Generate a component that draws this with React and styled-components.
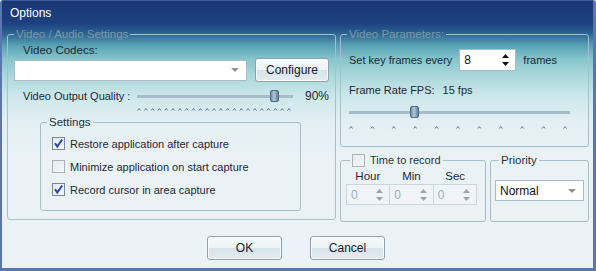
import React from "react";
import styled, { createGlobalStyle } from "styled-components";

const Global = createGlobalStyle`
  html, body { margin: 0; padding: 0; background: #ffffff; }
  body { font-family: "Liberation Sans", Arial, sans-serif; font-size: 11px; color: #1c2834; }
  * { box-sizing: border-box; }
`;

const Window = styled.div`
  width: 596px;
  height: 271px;
  display: flex;
  flex-direction: column;
  border: 3px solid #5b76ae;
  border-left-width: 2px;
  border-top: 1px solid #3d5c98;
  border-radius: 3px 3px 0 0;
  background: linear-gradient(
    180deg,
    #1a3774 0px,
    #1d4080 22px,
    #2c6692 33px,
    #5aa3b5 45px,
    #85c5cb 58px,
    #a9d7da 74px,
    #cce7ea 95px,
    #e2eff3 120px,
    #ebf2f6 160px
  );
`;

const TitleBar = styled.div`
  height: 24px;
  line-height: 24px;
  padding-left: 8px;
  color: #ffffff;
  font-size: 12px;
`;

const Body = styled.div`
  padding: 2px 4px 0 5px;
  display: flex;
  flex-direction: column;
`;

const Top = styled.div`
  display: grid;
  grid-template-columns: 329px 249px;
  column-gap: 4px;
`;

const Column = styled.div`
  display: flex;
  flex-direction: column;
  gap: 6px;
`;

const BottomRow = styled.div`
  display: grid;
  grid-template-columns: 146px 99px;
  column-gap: 4px;
`;

const Group = styled.fieldset`
  margin: 0;
  margin-left: ${(p) => p.$ml || 0}px;
  padding: 0 ${(p) => (p.$pad == null ? 6 : p.$pad)}px;
  min-width: 0;
  width: ${(p) => (p.$w ? p.$w + "px" : "auto")};
  height: ${(p) => p.$h}px;
  border: 1px solid #a3c0cb;
  border-radius: 3px;
  display: flex;
  flex-direction: column;
`;

const Legend = styled.legend`
  padding: 0 2px;
  margin-left: ${(p) => p.$ml || 0}px;
  line-height: 14px;
  font-size: ${(p) => p.$fs || 11}px;
  color: ${(p) => p.$color || "#26323e"};
  display: flex;
  align-items: center;
  gap: 5px;
`;

const Label = styled.div`
  line-height: 13px;
  font-size: ${(p) => p.$fs || 11.5}px;
  white-space: nowrap;
  flex: none;
  width: ${(p) => (p.$w ? p.$w + "px" : "auto")};
  margin: ${(p) => p.$mt || 0}px 0 0 ${(p) => p.$ml || 0}px;
`;

const Row = styled.div`
  display: flex;
  align-items: center;
  margin-top: ${(p) => p.$mt || 0}px;
  margin-left: ${(p) => p.$ml || 0}px;
  gap: ${(p) => p.$gap || 0}px;
  height: ${(p) => (p.$h ? p.$h + "px" : "auto")};
  font-size: 11px;
  white-space: nowrap;
`;

const Combo = styled.div`
  height: 21px;
  width: ${(p) => (p.$w ? p.$w + "px" : "100%")};
  background: #ffffff;
  border: 1px solid #acbcc6;
  display: flex;
  align-items: center;
  justify-content: space-between;
  padding: 0 7px 0 4px;
  font-size: 12px;
  color: #111;
`;

const Arrow = styled.span`
  width: 0;
  height: 0;
  border-left: 4px solid transparent;
  border-right: 4px solid transparent;
  border-top: 4px solid #8a949c;
`;

const Button = styled.button`
  width: ${(p) => p.$w || 75}px;
  height: 24px;
  padding: 0;
  border: 1px solid #8ea2ae;
  border-radius: 3px;
  box-shadow: inset 0 0 0 1px #f8fbfc;
  background: linear-gradient(180deg, #f7fafb 0%, #edf3f6 48%, #d7e3ea 52%, #e3ecf1 100%);
  font-family: "Liberation Sans", Arial, sans-serif;
  font-size: 12px;
  color: #16202a;
`;

const Track = styled.div`
  position: relative;
  flex: none;
  width: ${(p) => p.$w}px;
  height: 12px;
  &::before {
    content: "";
    position: absolute;
    left: 0;
    right: 0;
    top: 5px;
    height: 3px;
    background: #a5bcc8;
  }
`;

const Thumb = styled.div`
  position: absolute;
  top: 0;
  width: 9px;
  height: 12px;
  border: 1px solid #4d6d8d;
  border-radius: 2px;
  background: linear-gradient(90deg, #6b8ba6 0%, #b7cbd8 45%, #9cb4c6 60%, #5f7f9c 100%);
`;

const Value = styled.span`
  font-size: 12px;
  margin-left: 12px;
`;

const BoxWrap = styled.span`
  width: 13px;
  height: 13px;
  flex: none;
  border: 1px solid ${(p) => (p.$checked ? "#7a8896" : "#a9b3bc")};
  background: linear-gradient(135deg, #e4e9ee 0%, #f7f9fb 100%);
  display: inline-flex;
  align-items: center;
  justify-content: center;
`;

const CheckRow = styled.div`
  display: flex;
  align-items: center;
  gap: 5px;
  height: 15px;
  font-size: 11px;
  margin-top: ${(p) => p.$mt || 0}px;
  margin-left: 5px;
`;

const Spin = styled.div`
  height: ${(p) => p.$h || 22}px;
  width: ${(p) => (p.$w ? p.$w + "px" : "auto")};
  flex: ${(p) => (p.$w ? "none" : 1)};
  display: flex;
  align-items: center;
  justify-content: space-between;
  padding: 0 5px 0 4px;
  background: ${(p) => (p.$disabled ? "#eef4f7" : "#ffffff")};
  border: 1px solid ${(p) => (p.$disabled ? "#c9d6dd" : "#acbcc6")};
  color: ${(p) => (p.$disabled ? "#a4adb5" : "#111")};
  font-size: 12px;
`;

const Fields = styled.div`
  display: flex;
  width: 131px;
  margin-top: 1px;
`;

const Heads = styled.div`
  display: grid;
  grid-template-columns: repeat(3, 1fr);
  margin-top: 2px;
  line-height: 14px;
  font-size: 11.5px;
  text-align: center;
  width: 131px;
`;

const Buttons = styled.div`
  display: flex;
  justify-content: center;
  gap: 28px;
  margin-top: 14px;
  padding-right: 4px;
`;

function Check({ checked }) {
  return (
    <BoxWrap $checked={checked}>
      {checked && (
        <svg width="11" height="11" viewBox="0 0 11 11">
          <path d="M2 5.2 L4.3 8.5 L9.2 1.5" fill="none" stroke="#2349a3" strokeWidth="2" />
        </svg>
      )}
    </BoxWrap>
  );
}

function Arrows({ color }) {
  return (
    <svg width="9" height="14" viewBox="0 0 9 14">
      <path d="M4.5 1 L8 5 L1 5 Z" fill={color} />
      <path d="M4.5 13 L8 9 L1 9 Z" fill={color} />
    </svg>
  );
}

function Ticks({ width, count }) {
  const step = (width - 4) / (count - 1);
  return (
    <svg width={width} height="5" viewBox={`0 0 ${width} 5`}>
      {Array.from({ length: count }).map((_, i) => {
        const x = 2 + i * step;
        return (
          <path
            key={i}
            d={`M${x - 1.5} 3.5 L${x} 1.5 L${x + 1.5} 3.5`}
            fill="none"
            stroke="#5d7c9c"
            strokeWidth="1"
          />
        );
      })}
    </svg>
  );
}

export default function App() {
  return (
    <>
      <Global />
      <Window>
        <TitleBar>Options</TitleBar>
        <Body>
          <Top>
            <Group $h={193}>
              <Legend $color="#7f97a5" $fs={11.5}>Video / Audio Settings</Legend>
              <Label $mt={3} $ml={9}>Video Codecs:</Label>
              <Row $mt={1} $h={24} $gap={8}>
                <Combo $w={233}>
                  <span />
                  <Arrow />
                </Combo>
                <Button $w={74}>Configure</Button>
              </Row>
              <Row $mt={7} $ml={9} $h={14}>
                <Label $w={114} $fs={11}>Video Output Quality :</Label>
                <Track $w={156}>
                  <Thumb style={{ left: 133 }} />
                </Track>
                <Value>90%</Value>
              </Row>
              <Row $mt={4} $ml={123}>
                <Ticks width={154} count={23} />
              </Row>
              <Group $h={96} $w={261} $ml={26} style={{ marginTop: 3 }}>
                <Legend $fs={11.5}>Settings</Legend>
                <CheckRow $mt={7}>
                  <Check checked />
                  Restore application after capture
                </CheckRow>
                <CheckRow $mt={8}>
                  <Check />
                  Minimize application on start capture
                </CheckRow>
                <CheckRow $mt={8}>
                  <Check checked />
                  Record cursor in area capture
                </CheckRow>
              </Group>
            </Group>

            <Column>
              <Group $h={120}>
                <Legend $color="#7f97a5" $fs={11.5}>Video Parameters:</Legend>
                <Row $mt={8} $ml={2}>
                  <span>Set key frames every</span>
                  <Spin $w={57} style={{ marginLeft: 7 }}>
                    <span>8</span>
                    <Arrows color="#111" />
                  </Spin>
                  <span style={{ marginLeft: 7 }}>frames</span>
                </Row>
                <Row $mt={12} $ml={2} $h={14} $gap={8}>
                  <span>Frame Rate FPS:</span>
                  <span>15 fps</span>
                </Row>
                <Row $mt={9} $ml={2}>
                  <Track $w={221}>
                    <Thumb style={{ left: 61 }} />
                  </Track>
                </Row>
                <Row $mt={7} $ml={2}>
                  <Ticks width={218} count={11} />
                </Row>
              </Group>
              <BottomRow>
                <Group $h={69} $pad={5}>
                  <Legend $ml={4} $fs={11}>
                    <Check />
                    Time to record
                  </Legend>
                  <Heads>
                    <span>Hour</span>
                    <span>Min</span>
                    <span>Sec</span>
                  </Heads>
                  <Fields>
                    <Spin $disabled $h={21}>
                      <span>0</span>
                      <Arrows color="#9aa5ae" />
                    </Spin>
                    <Spin $disabled $h={21} style={{ borderLeft: "none" }}>
                      <span>0</span>
                      <Arrows color="#9aa5ae" />
                    </Spin>
                    <Spin $disabled $h={21} style={{ borderLeft: "none" }}>
                      <span>0</span>
                      <Arrows color="#9aa5ae" />
                    </Spin>
                  </Fields>
                </Group>
                <Group $h={69} $pad={4}>
                  <Legend $ml={4} $fs={11.5}>Priority</Legend>
                  <Row $mt={13}>
                    <Combo>
                      <span>Normal</span>
                      <Arrow />
                    </Combo>
                  </Row>
                </Group>
              </BottomRow>
            </Column>
          </Top>
          <Buttons>
            <Button>OK</Button>
            <Button>Cancel</Button>
          </Buttons>
        </Body>
      </Window>
    </>
  );
}
